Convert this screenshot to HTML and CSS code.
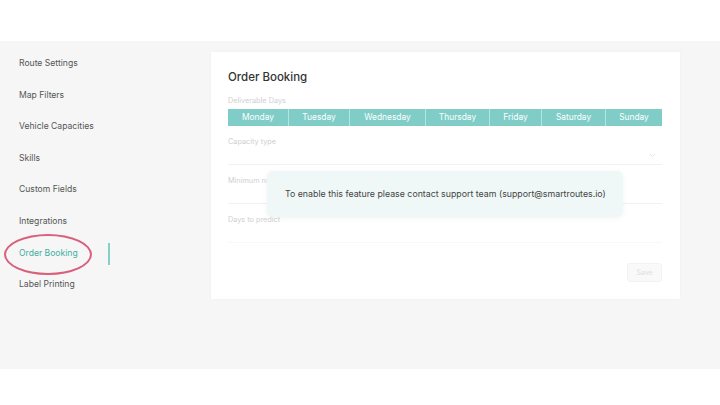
FILE: index.html
```html
<!DOCTYPE html>
<html lang="en">

<head>
    <meta charset="UTF-8">
    <meta name="viewport" content="width=device-width, initial-scale=1.0">
    <title>Settings - Order Booking</title>
    <link rel="stylesheet" href="styles.css">
</head>

<body>

    <div class="topbar"></div>

    <div class="main">
        <div class="sidebar">
            <div class="nav-item">Route Settings</div>
            <div class="nav-item">Map Filters</div>
            <div class="nav-item">Vehicle Capacities</div>
            <div class="nav-item">Skills</div>
            <div class="nav-item">Custom Fields</div>
            <div class="nav-item">Integrations</div>
            <div class="nav-item active">
                Order Booking
                <span class="highlight"></span>
            </div>
            <div class="nav-item">Label Printing</div>
        </div>

        <div class="card">
            <h1>Order Booking</h1>

            <div class="field-label">Deliverable Days</div>
            <div class="days">
                <div class="day">Monday</div>
                <div class="day">Tuesday</div>
                <div class="day">Wednesday</div>
                <div class="day">Thursday</div>
                <div class="day">Friday</div>
                <div class="day">Saturday</div>
                <div class="day">Sunday</div>
            </div>

            <div class="field">
                <div class="field-label">Capacity type</div>
                <div class="select">
                    <svg width="7" height="5" viewBox="0 0 7 5"><path d="M1 1l2.5 2.5L6 1" fill="none" stroke="#e2e2e2" stroke-width="1"/></svg>
                </div>
            </div>

            <div class="field">
                <div class="field-label">Minimum number of orders</div>
                <div class="select"></div>
            </div>

            <div class="field">
                <div class="field-label">Days to predict</div>
                <div class="select faint"></div>
            </div>

            <div class="actions">
                <button class="save-btn">Save</button>
            </div>

            <div class="notice">
                To enable this feature please contact support team (support@smartroutes.io)
            </div>
        </div>
    </div>

    <div class="footer"></div>

</body>

</html>
```

FILE: styles.css
```css
body {
    margin: 0;
    font-family: Inter, "Open Sans", sans-serif;
    background-color: #fff;
}

.topbar {
    height: 41px;
    background-color: #fff;
}

.main {
    display: flex;
    height: 328px;
    background-color: #f6f6f6;
}

.footer {
    height: 36px;
    background-color: #fff;
}

/* left navigation */
.sidebar {
    width: 211px;
    padding-top: 7px;
}

.nav-item {
    position: relative;
    width: 91px;
    height: 31.6px;
    line-height: 31.6px;
    padding-left: 19px;
    font-size: 8.6px;
    color: #555;
}

.nav-item.active {
    color: #3fae9f;
}

.nav-item.active::after {
    content: "";
    position: absolute;
    right: 0;
    top: 5px;
    width: 2px;
    height: 22px;
    background-color: #86d0c9;
}

.highlight {
    position: absolute;
    left: 4px;
    top: -4px;
    width: 84px;
    height: 37px;
    border: 2px solid #d9607c;
    border-radius: 50%;
}

/* settings card */
.card {
    position: relative;
    width: 469px;
    height: 247px;
    margin-top: 11px;
    padding: 0 18px 0 17px;
    background-color: #fff;
    box-sizing: border-box;
    box-shadow: 0 0 3px rgba(0, 0, 0, 0.03);
}

h1 {
    margin: 0;
    padding-top: 17px;
    height: 27px;
    font-size: 11.5px;
    font-weight: 500;
    line-height: 16px;
    color: #333;
}

.field-label {
    font-size: 7.3px;
    line-height: 10px;
    color: #cfcfcf;
    white-space: nowrap;
}

.days {
    display: grid;
    grid-template-columns: 60px 61px 76px 64px 52px 64px 57px;
    height: 17px;
    margin-top: 3px;
    background-color: #80cdc7;
}

.day {
    font-size: 8.4px;
    line-height: 17px;
    text-align: center;
    color: #fff;
    border-left: 1px solid rgba(255, 255, 255, 0.45);
}

.day:first-child {
    border-left: none;
}

.field {
    margin-top: 11px;
}

.select {
    display: flex;
    justify-content: flex-end;
    align-items: center;
    height: 17px;
    padding-right: 6px;
    border-bottom: 1px solid #f1f1f1;
}

.select.faint {
    border-bottom-color: #f8f8f8;
}

.actions {
    display: flex;
    justify-content: flex-end;
    margin-top: 20px;
}

.save-btn {
    width: 35px;
    height: 19px;
    padding: 0;
    font-family: inherit;
    font-size: 7px;
    color: #e0e0e0;
    background-color: #f9f9f9;
    border: 1px solid #f2f2f2;
    border-radius: 3px;
}

/* disabled feature notice */
.notice {
    position: absolute;
    left: 56px;
    top: 119px;
    width: 356px;
    height: 46px;
    box-sizing: border-box;
    padding-left: 18px;
    font-size: 8.8px;
    line-height: 46px;
    color: #444;
    background-color: #eff8f7;
    border-radius: 6px;
    box-shadow: 0 1px 6px rgba(0, 0, 0, 0.05);
}
```
